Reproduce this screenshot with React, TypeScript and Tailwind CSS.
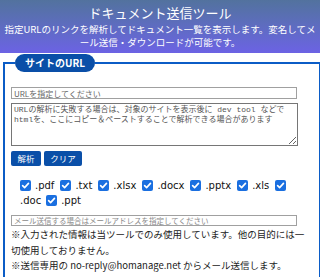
import React from "react";

function Cb() {
  return (
    <span className="inline-flex w-[11px] h-[11px] rounded-[2px] bg-[#1a6fe0] items-center justify-center shrink-0">
      <svg width="9" height="9" viewBox="0 0 10 10" fill="none">
        <path d="M1.8 5.2 L4 7.4 L8.3 2.6" stroke="white" strokeWidth="1.8" strokeLinecap="round" strokeLinejoin="round" />
      </svg>
    </span>
  );
}

function Item({ label }: { label: string }) {
  return (
    <span className="inline-flex items-center gap-[4px]">
      <Cb />
      <span>{label}</span>
    </span>
  );
}

export default function App() {
  return (
    <div className="w-[320px] h-[277px] overflow-hidden bg-white font-['Noto_Sans_CJK_JP',sans-serif] text-[#222]">
      <div className="h-[53px] bg-gradient-to-b from-[#52729e] to-[#6c62e4] text-white text-center pt-[3px]">
        <div className="text-[13px] leading-[20px]">ドキュメント送信ツール</div>
        <div className="text-[9.5px] leading-[13px]">
          <div className="whitespace-nowrap">指定URLのリンクを解析してドキュメント一覧を表示します。変名してメ</div>
          <div className="whitespace-nowrap">ール送信・ダウンロードが可能です。</div>
        </div>
      </div>
      <fieldset className="mx-[3px] mt-[1px] w-[313px] border-2 border-[#0b5cc6] pl-[6px] pr-[15px] pb-[20px]">
        <legend className="ml-[4px] px-[10px] h-[18px] leading-[18px] rounded-full bg-[#0a4fa8] text-white text-[10px] font-bold">
          サイトのURL
        </legend>
        <input
          className="block mt-[15px] w-[286px] h-[12px] border border-[#a0a0a0] px-[2px] text-[8px] leading-[10px] placeholder:text-[#666] outline-none"
          placeholder="URLを指定してください"
        />
        <textarea
          className="block mt-[4px] w-[287px] h-[43px] border border-[#767676] px-[2px] py-[1px] text-[8px] leading-[10px] font-['Liberation_Mono','Noto_Sans_CJK_JP',monospace] placeholder:text-[#555] resize-y outline-none"
          placeholder="URLの解析に失敗する場合は、対象のサイトを表示後に dev tool などでhtmlを、ここにコピー＆ペーストすることで解析できる場合があります"
        />
        <div className="flex gap-[3px] mt-[5px]">
          <button className="w-[30px] h-[15px] rounded-[2px] bg-[#0a4fa8] text-white text-[8.5px] leading-[15px]">解析</button>
          <button className="w-[38px] h-[15px] rounded-[2px] bg-[#0a4fa8] text-white text-[8.5px] leading-[15px]">クリア</button>
        </div>
        <div className="mt-[12px] pl-[9px] font-['DejaVu_Sans',sans-serif] text-[10px] leading-[15px] text-[#111]">
          <div className="flex items-center gap-[6px]">
            <Item label=".pdf" />
            <Item label=".txt" />
            <Item label=".xlsx" />
            <Item label=".docx" />
            <Item label=".pptx" />
            <Item label=".xls" />
            <Cb />
          </div>
          <div className="flex items-center gap-[5px]">
            <span>.doc</span>
            <Item label=".ppt" />
          </div>
        </div>
        <input
          className="block mt-[7px] w-[286px] h-[11px] border border-[#a0a0a0] px-[2px] text-[7.5px] leading-[9px] placeholder:text-[#888] outline-none"
          placeholder="メール送信する場合はメールアドレスを指定してください"
        />
        <div className="text-[9.5px] leading-[15.5px] mt-[1px] whitespace-nowrap">
          <div>※入力された情報は当ツールでのみ使用しています。他の目的には一</div>
          <div>切使用しておりません。</div>
          <div>※送信専用の no-reply@homanage.net からメール送信します。</div>
        </div>
      </fieldset>
    </div>
  );
}
